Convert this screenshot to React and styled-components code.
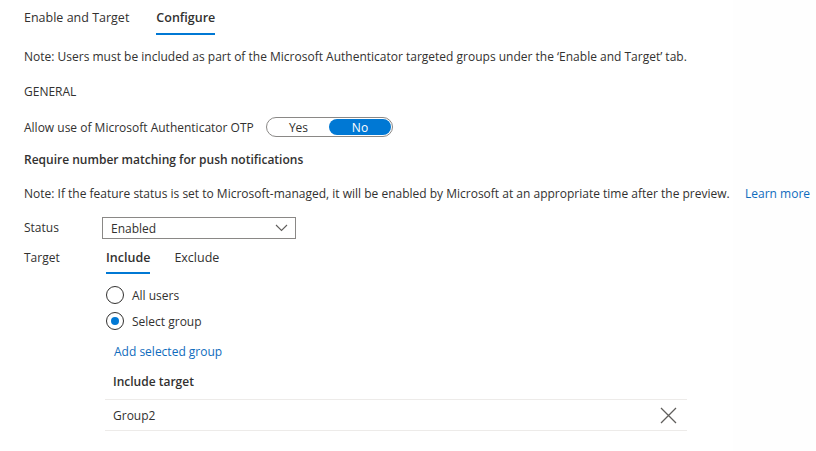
import React from 'react';
import styled, { createGlobalStyle } from 'styled-components';

const GlobalStyle = createGlobalStyle`
  html, body {
    margin: 0;
    padding: 0;
    background: #ffffff;
  }
  body {
    font-family: "Open Sans", "Noto Sans", sans-serif;
    font-size: 12px;
    color: #323130;
  }
`;

const Page = styled.div`
  display: flex;
  width: 816px;
  height: 451px;
  overflow: hidden;
`;

const Main = styled.div`
  width: 733px;
  flex-shrink: 0;
  padding-left: 24px;
  box-sizing: border-box;
  display: flex;
  flex-direction: column;
  background: #ffffff;
`;

const Side = styled.div`
  flex: 1;
  background: #fefefe;
  padding-top: 184px;
  padding-left: 12px;
`;

const TabBar = styled.div`
  display: flex;
  gap: 27px;
  height: 35px;
`;

const Tab = styled.div`
  height: ${p => p.$h ?? 35}px;
  box-sizing: border-box;
  padding-top: ${p => p.$pt ?? 8}px;
  line-height: 20px;
  font-size: 12.5px;
  color: #323130;
  font-weight: ${p => (p.$active ? 600 : 400)};
  border-bottom: 2px solid ${p => (p.$active ? '#0078d4' : 'transparent')};
  margin-bottom: 1px;
`;

const Text = styled.div`
  line-height: 20px;
  margin-top: ${p => p.$mt || 0}px;
  font-weight: ${p => (p.$bold ? 600 : 400)};
  white-space: nowrap;
`;

const Row = styled.div`
  display: flex;
  align-items: center;
  margin-top: ${p => p.$mt || 0}px;
`;

const Toggle = styled.div`
  display: flex;
  margin-left: 12px;
  width: 127px;
  height: 20px;
  box-sizing: border-box;
  border: 1px solid #8a8886;
  border-radius: 10px;
  padding: 1px;
`;

const ToggleOption = styled.div`
  flex: 1;
  display: flex;
  align-items: center;
  justify-content: center;
  border-radius: 8px;
  font-size: 12px;
  background: ${p => (p.$on ? '#0078d4' : 'transparent')};
  color: ${p => (p.$on ? '#ffffff' : '#323130')};
`;

const Label = styled.div`
  width: 78px;
  line-height: 20px;
  flex-shrink: 0;
`;

const Select = styled.div`
  width: 194px;
  height: 22px;
  box-sizing: border-box;
  border: 1px solid #8a8886;
  display: flex;
  align-items: center;
  justify-content: space-between;
  padding: 0 7px 0 8px;
`;

const FieldRow = styled.div`
  display: flex;
  align-items: ${p => p.$align || 'center'};
  margin-top: ${p => p.$mt || 0}px;
`;

const TargetBody = styled.div`
  display: flex;
  flex-direction: column;
  margin-left: 4px;
`;

const SubTabs = styled.div`
  display: flex;
  gap: 24px;
`;

const Radio = styled.div`
  display: flex;
  align-items: center;
  gap: 8px;
  height: 20px;
  margin-top: ${p => p.$mt || 0}px;
`;

const RadioCircle = styled.span`
  width: 18px;
  height: 18px;
  box-sizing: border-box;
  border-radius: 50%;
  border: 1px solid #323130;
  display: flex;
  align-items: center;
  justify-content: center;
  &::after {
    content: '';
    width: 8px;
    height: 8px;
    border-radius: 50%;
    background: ${p => (p.$checked ? '#0078d4' : 'transparent')};
  }
`;

const Link = styled.a`
  color: #0f6cbd;
  text-decoration: none;
  line-height: 20px;
  display: block;
  margin-top: ${p => p.$mt || 0}px;
  margin-left: ${p => p.$ml || 0}px;
  white-space: nowrap;
`;

const Table = styled.div`
  width: 582px;
  margin-left: -1px;
  margin-top: 10px;
`;

const TableHead = styled.div`
  font-weight: 600;
  line-height: 20px;
  padding: 0 8px 7px;
  border-bottom: 1px solid #edebe9;
`;

const TableRow = styled.div`
  display: flex;
  align-items: center;
  justify-content: space-between;
  height: 30px;
  padding: 0 10px 0 8px;
  border-bottom: 1px solid #edebe9;
`;

const Chevron = () => (
  <svg width="13" height="8" viewBox="0 0 13 8">
    <path d="M1 1l5.5 5.5L12 1" fill="none" stroke="#605e5c" strokeWidth="1.1" />
  </svg>
);

const Close = () => (
  <svg width="17" height="17" viewBox="0 0 17 17">
    <path d="M1 1l15 15M16 1L1 16" stroke="#605e5c" strokeWidth="1.3" />
  </svg>
);

export default function App() {
  return (
    <Page>
      <GlobalStyle />
      <Main>
        <TabBar>
          <Tab>Enable and Target</Tab>
          <Tab $active>Configure</Tab>
        </TabBar>
        <Text $mt={12}>
          Note: Users must be included as part of the Microsoft Authenticator targeted groups under the ‘Enable and Target’ tab.
        </Text>
        <Text $mt={15}>GENERAL</Text>
        <Row $mt={15}>
          <span>Allow use of Microsoft Authenticator OTP</span>
          <Toggle>
            <ToggleOption>Yes</ToggleOption>
            <ToggleOption $on>No</ToggleOption>
          </Toggle>
        </Row>
        <Text $mt={13} $bold>Require number matching for push notifications</Text>
        <Text $mt={14}>
          Note: If the feature status is set to Microsoft-managed, it will be enabled by Microsoft at an appropriate time after the preview.
        </Text>
        <FieldRow $mt={13}>
          <Label>Status</Label>
          <Select>
            <span>Enabled</span>
            <Chevron />
          </Select>
        </FieldRow>
        <FieldRow $mt={9} $align="flex-start">
          <Label>Target</Label>
          <TargetBody>
            <SubTabs>
              <Tab $active $h={26} $pt={0}>Include</Tab>
              <Tab $h={26} $pt={0}>Exclude</Tab>
            </SubTabs>
            <Radio $mt={10}>
              <RadioCircle />
              <span>All users</span>
            </Radio>
            <Radio $mt={6}>
              <RadioCircle $checked />
              <span>Select group</span>
            </Radio>
            <Link $mt={11} $ml={8}>Add selected group</Link>
            <Table>
              <TableHead>Include target</TableHead>
              <TableRow>
                <span>Group2</span>
                <Close />
              </TableRow>
            </Table>
          </TargetBody>
        </FieldRow>
      </Main>
      <Side>
        <Link>Learn more</Link>
      </Side>
    </Page>
  );
}
